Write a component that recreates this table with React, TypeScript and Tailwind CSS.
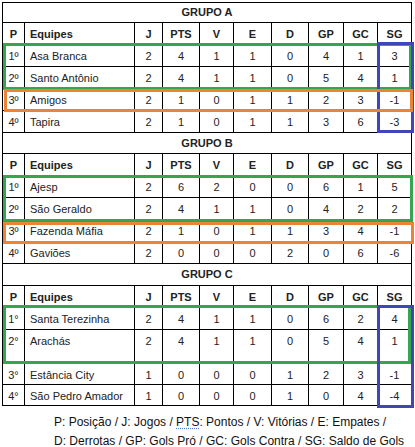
type Row = (string | number)[];

type Group = {
  title: string;
  titleH: string;
  rows: { cells: Row; h: string }[];
};

const cols =
  "grid grid-cols-[22px_110px_28px_37px_34px_38px_37px_35px_34px_34px]";

const header = ["P", "Equipes", "J", "PTS", "V", "E", "D", "GP", "GC", "SG"];

const groups: Group[] = [
  {
    title: "GRUPO A",
    titleH: "h-[20px]",
    rows: [
      { cells: ["1º", "Asa Branca", 2, 4, 1, 1, 0, 4, 1, 3], h: "h-[22px]" },
      { cells: ["2º", "Santo Antônio", 2, 4, 1, 1, 0, 5, 4, 1], h: "h-[22px]" },
      { cells: ["3º", "Amigos", 2, 1, 0, 1, 1, 2, 3, -1], h: "h-[22px]" },
      { cells: ["4º", "Tapira", 2, 1, 0, 1, 1, 3, 6, -3], h: "h-[22px]" },
    ],
  },
  {
    title: "GRUPO B",
    titleH: "h-[21px]",
    rows: [
      { cells: ["1º", "Ajesp", 2, 6, 2, 0, 0, 6, 1, 5], h: "h-[22px]" },
      { cells: ["2º", "São Geraldo", 2, 4, 1, 1, 0, 4, 2, 2], h: "h-[22px]" },
      { cells: ["3º", "Fazenda Máfia", 2, 1, 0, 1, 1, 3, 4, -1], h: "h-[22px]" },
      { cells: ["4º", "Gaviões", 2, 0, 0, 0, 2, 0, 6, -6], h: "h-[22px]" },
    ],
  },
  {
    title: "GRUPO C",
    titleH: "h-[22px]",
    rows: [
      { cells: ["1°", "Santa Terezinha", 2, 4, 1, 1, 0, 6, 2, 4], h: "h-[22px]" },
      { cells: ["2°", "Arachás", 2, 4, 1, 1, 0, 5, 4, 1], h: "h-[34px]" },
      { cells: ["3°", "Estância City", 1, 0, 0, 0, 1, 2, 3, -1], h: "h-[21px]" },
      { cells: ["4°", "São Pedro Amador", 1, 0, 0, 0, 1, 0, 4, -4], h: "h-[21px]" },
    ],
  },
];

const Cell = ({ value, idx }: { value: string | number; idx: number }) => (
  <div
    className={`border-r border-black pt-[5px] ${
      idx === 1 ? "pl-[5px] text-left" : "text-center"
    }`}
  >
    {value}
  </div>
);

const GroupTable = ({ group }: { group: Group }) => (
  <>
    <div
      className={`${group.titleH} border-r border-b border-black flex items-center justify-center font-bold`}
    >
      {group.title}
    </div>
    <div className={`${cols} h-[22px] border-b border-black font-bold`}>
      {header.map((h, i) => (
        <Cell key={h} value={h} idx={i} />
      ))}
    </div>
    {group.rows.map((r) => (
      <div key={r.cells[1] as string} className={`${cols} ${r.h} border-b border-black`}>
        {r.cells.map((c, i) => (
          <Cell key={i} value={c} idx={i} />
        ))}
      </div>
    ))}
  </>
);

export default function App() {
  return (
    <div className="relative w-[415px] h-[447px] overflow-hidden bg-white text-[#222] text-[11px] leading-[13px] font-['Liberation_Sans',Arial,sans-serif]">
      <div className="pl-[2px] pt-[2px]">
        <div className="w-[410px] border-l border-t border-black">
          {groups.map((g) => (
            <GroupTable key={g.title} group={g} />
          ))}
        </div>
      </div>

      {/* legenda */}
      <div className="pl-[54px] pt-[7px] text-[12px] leading-[18.5px] text-[#111]">
        <p>
          P: Posição / J: Jogos /{" "}
          <span className="underline decoration-dotted decoration-[#5b7fd6] underline-offset-2">
            PTS
          </span>
          : Pontos / V: Vitórias / E: Empates /
        </p>
        <p>D: Derrotas / GP: Gols Pró / GC: Gols Contra / SG: Saldo de Gols</p>
      </div>

      {/* marcações */}
      <div className="absolute left-[3px] top-[43px] w-[409px] h-[47px] border-[3px] border-[#35a552]" />
      <div className="absolute left-[377px] top-[42px] w-[37px] h-[91px] border-[3px] border-[#3f46b8]" />
      <div className="absolute left-[4px] top-[89px] w-[409px] h-[23px] border-[3px] border-[#ec8336]" />

      <div className="absolute left-[3px] top-[175px] w-[410px] h-[47px] border-[3px] border-[#35a552]" />
      <div className="absolute left-[3px] top-[222px] w-[411px] h-[22px] border-[3px] border-[#ec8336]" />

      <div className="absolute left-[3px] top-[305px] w-[408px] h-[59px] border-[3px] border-[#35a552]" />
      <div className="absolute left-[377px] top-[305px] w-[37px] h-[103px] border-[3px] border-[#3f46b8]" />
    </div>
  );
}
